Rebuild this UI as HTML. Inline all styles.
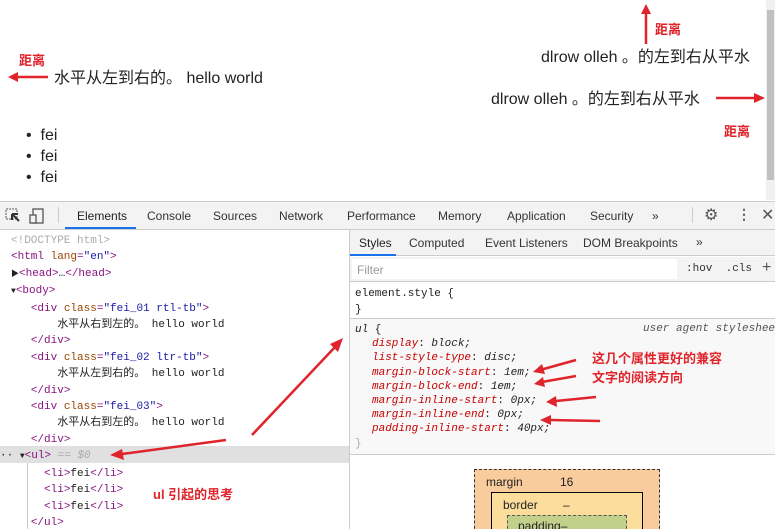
<!DOCTYPE html>
<html style="overflow:hidden;width:775px;height:529px"><head><meta charset="utf-8"><style>
*{margin:0;padding:0;box-sizing:border-box}
body{width:775px;height:529px;overflow:hidden;background:#fff;position:relative;font-family:"Liberation Sans","Noto Sans CJK SC",sans-serif}
.a{position:absolute;white-space:nowrap}
.m{font-family:"Liberation Mono","Noto Sans CJK SC",monospace;font-size:11px;color:#222}
.tg{color:#881280}.at{color:#994500}.av{color:#1a1aa6}.gr{color:#aaa}
.red{color:#e0242b;font-weight:bold;font-size:13px}
.t16{font-size:16px;color:#222}
.tab{font-size:12px;color:#333;top:209px}
.prop{color:#c80000;font-style:italic}
.val{color:#222;font-style:italic}
</style></head><body>
<!-- page area -->
<div class="a" style="left:766px;top:0;width:9px;height:200px;background:#f1f1f1"></div>
<div class="a" style="left:767px;top:10px;width:7px;height:170px;background:#c1c1c1"></div>
<div class="a t16" style="left:54px;top:64px">水平从左到右的。 hello world</div>
<div class="a t16" style="left:541px;top:43px">dlrow olleh 。的左到右从平水</div>
<div class="a t16" style="left:491px;top:85px">dlrow olleh 。的左到右从平水</div>
<div class="a t16" style="left:26px;top:125px;line-height:21px">•&nbsp;&nbsp;fei<br>•&nbsp;&nbsp;fei<br>•&nbsp;&nbsp;fei</div>
<div class="a red" style="left:19px;top:50px">距离</div>
<div class="a red" style="left:655px;top:19px">距离</div>
<div class="a red" style="left:724px;top:121px">距离</div>
<!-- devtools toolbar -->
<div class="a" style="left:0;top:201px;width:775px;height:29px;background:#f3f3f3;border-top:1px solid #ccc;border-bottom:1px solid #ccc"></div>
<svg class="a" style="left:5px;top:207px" width="45" height="18"><rect x="1" y="2" width="11" height="10" fill="none" stroke="#555" stroke-dasharray="2,1"/><path d="M7 7 L14 14 M7 7 L7 13 M7 7 L13 7" stroke="#333" stroke-width="2"/><rect x="28" y="2" width="10" height="14" fill="none" stroke="#555" stroke-width="1.3"/><rect x="25" y="8" width="6" height="8" fill="#f3f3f3" stroke="#555" stroke-width="1.3"/></svg>
<div class="a" style="left:58px;top:207px;width:1px;height:16px;background:#ccc"></div>
<div class="a tab" style="left:77px;color:#222">Elements</div>
<div class="a" style="left:65px;top:227px;width:71px;height:2px;background:#1a73e8"></div>
<div class="a tab" style="left:147px">Console</div>
<div class="a tab" style="left:213px">Sources</div>
<div class="a tab" style="left:279px">Network</div>
<div class="a tab" style="left:347px">Performance</div>
<div class="a tab" style="left:438px">Memory</div>
<div class="a tab" style="left:507px">Application</div>
<div class="a tab" style="left:590px">Security</div>
<div class="a tab" style="left:652px">»</div>
<div class="a" style="left:692px;top:207px;width:1px;height:16px;background:#ccc"></div>
<div class="a" style="left:704px;top:205px;font-size:16px;color:#555">⚙</div>
<div class="a" style="left:737px;top:206px;font-size:14px;color:#555;font-weight:bold">⋮</div>
<div class="a" style="left:761px;top:205px;font-size:16px;color:#555">✕</div>
<!-- elements panel -->
<div class="a" style="left:0;top:446px;width:349px;height:17px;background:#e0e0e0"></div>
<div class="a m" style="left:11px;top:233px;line-height:16.4px">
<span class="gr">&lt;!DOCTYPE html&gt;</span><br>
<span class="tg">&lt;html </span><span class="at">lang</span><span class="tg">=</span><span class="av">"en"</span><span class="tg">&gt;</span><br>
<span style="font-size:8px">▶</span><span class="tg">&lt;head&gt;</span>…<span class="tg">&lt;/head&gt;</span><br>
<span style="font-size:8px">▼</span><span class="tg">&lt;body&gt;</span><br>
&nbsp;&nbsp;&nbsp;<span class="tg">&lt;div </span><span class="at">class</span><span class="tg">=</span><span class="av">"fei_01 rtl-tb"</span><span class="tg">&gt;</span><br>
&nbsp;&nbsp;&nbsp;&nbsp;&nbsp;&nbsp;&nbsp;水平从右到左的。 hello world<br>
&nbsp;&nbsp;&nbsp;<span class="tg">&lt;/div&gt;</span><br>
&nbsp;&nbsp;&nbsp;<span class="tg">&lt;div </span><span class="at">class</span><span class="tg">=</span><span class="av">"fei_02 ltr-tb"</span><span class="tg">&gt;</span><br>
&nbsp;&nbsp;&nbsp;&nbsp;&nbsp;&nbsp;&nbsp;水平从左到右的。 hello world<br>
&nbsp;&nbsp;&nbsp;<span class="tg">&lt;/div&gt;</span><br>
&nbsp;&nbsp;&nbsp;<span class="tg">&lt;div </span><span class="at">class</span><span class="tg">=</span><span class="av">"fei_03"</span><span class="tg">&gt;</span><br>
&nbsp;&nbsp;&nbsp;&nbsp;&nbsp;&nbsp;&nbsp;水平从右到左的。 hello world<br>
&nbsp;&nbsp;&nbsp;<span class="tg">&lt;/div&gt;</span><br>
<span style="margin-left:-11px">··</span>&nbsp;<span style="font-size:8px">▼</span><span class="tg">&lt;ul&gt;</span> <span class="gr">== <i>$0</i></span><br>
&nbsp;&nbsp;&nbsp;&nbsp;&nbsp;<span class="tg">&lt;li&gt;</span>fei<span class="tg">&lt;/li&gt;</span><br>
&nbsp;&nbsp;&nbsp;&nbsp;&nbsp;<span class="tg">&lt;li&gt;</span>fei<span class="tg">&lt;/li&gt;</span><br>
&nbsp;&nbsp;&nbsp;&nbsp;&nbsp;<span class="tg">&lt;li&gt;</span>fei<span class="tg">&lt;/li&gt;</span><br>
&nbsp;&nbsp;&nbsp;<span class="tg">&lt;/ul&gt;</span>
</div>
<div class="a" style="left:27px;top:463px;width:1px;height:66px;background:#ccc"></div>
<div class="a red" style="left:153px;top:484px">ul 引起的思考</div>
<!-- styles panel -->
<div class="a" style="left:349px;top:230px;width:1px;height:299px;background:#ccc"></div>
<div class="a" style="left:350px;top:230px;width:425px;height:26px;background:#f3f3f3;border-bottom:1px solid #ccc"></div>
<div class="a" style="left:359px;top:236px;font-size:12px;color:#222">Styles</div>
<div class="a" style="left:350px;top:254px;width:46px;height:2px;background:#1a73e8"></div>
<div class="a" style="left:409px;top:236px;font-size:12px;color:#333">Computed</div>
<div class="a" style="left:485px;top:236px;font-size:12px;color:#333">Event Listeners</div>
<div class="a" style="left:583px;top:236px;font-size:12px;color:#333">DOM Breakpoints</div>
<div class="a" style="left:696px;top:235px;font-size:12px;color:#333">»</div>
<div class="a" style="left:350px;top:257px;width:425px;height:25px;background:#f3f3f3;border-bottom:1px solid #ccc"></div>
<div class="a" style="left:352px;top:259px;width:325px;height:20px;background:#fff"></div>
<div class="a" style="left:357px;top:263px;font-size:12px;color:#999">Filter</div>
<div class="a m" style="left:686px;top:263px;color:#333">:hov &nbsp;.cls</div>
<div class="a" style="left:762px;top:259px;font-size:16px;color:#555">+</div>
<div class="a m" style="left:355px;top:286px;line-height:16px">element.style {<br>}</div>
<div class="a" style="left:350px;top:318px;width:425px;height:1px;background:#ccc"></div>
<div class="a" style="left:350px;top:319px;width:425px;height:135px;background:#f8f8f8"></div>
<div class="a m" style="left:643px;top:323px;font-style:italic;color:#555">user agent stylesheet</div>
<div class="a m" style="left:355px;top:323px;line-height:14.2px"><i>ul</i> {<br>
<div style="padding-left:17px"><span class="prop">display</span>: <span class="val">block;</span><br>
<span class="prop">list-style-type</span>: <span class="val">disc;</span><br>
<span class="prop">margin-block-start</span>: <span class="val">1em;</span><br>
<span class="prop">margin-block-end</span>: <span class="val">1em;</span><br>
<span class="prop">margin-inline-start</span>: <span class="val">0px;</span><br>
<span class="prop">margin-inline-end</span>: <span class="val">0px;</span><br>
<span class="prop">padding-inline-start</span>: <span class="val">40px;</span></div>
<span class="gr">}</span></div>
<div class="a" style="left:350px;top:454px;width:425px;height:1px;background:#ccc"></div>
<div class="a red" style="left:592px;top:349px;line-height:19px">这几个属性更好的兼容<br>文字的阅读方向</div>
<!-- box model -->
<div class="a" style="left:474px;top:469px;width:186px;height:70px;background:#f9cc9d;border:1px dashed #333"></div>
<div class="a" style="left:486px;top:475px;font-size:12px;color:#222">margin</div>
<div class="a" style="left:560px;top:475px;font-size:12px;color:#222">16</div>
<div class="a" style="left:491px;top:492px;width:152px;height:50px;background:#fddd9b;border:1px solid #000"></div>
<div class="a" style="left:503px;top:498px;font-size:12px;color:#222">border</div>
<div class="a" style="left:563px;top:498px;font-size:12px;color:#222">–</div>
<div class="a" style="left:507px;top:515px;width:120px;height:30px;background:#c3d08b;border:1px dashed #555"></div>
<div class="a" style="left:518px;top:519px;font-size:12px;color:#222">padding–</div>
<svg class="a" style="left:0;top:0" width="775" height="529">
<g stroke="#e0242b" stroke-width="2.5" fill="#e0242b">
<line x1="48" y1="77" x2="14" y2="77"/><polygon points="8,77 18,72 18,82" stroke="none"/>
<line x1="646" y1="44" x2="646" y2="10"/><polygon points="646,4 641,14 651,14" stroke="none"/>
<line x1="716" y1="98" x2="758" y2="98"/><polygon points="765,98 754,93 754,103" stroke="none"/>
<line x1="252" y1="435" x2="336" y2="346"/><polygon points="343,338 330,344 338,352" stroke="none"/>
<line x1="226" y1="440" x2="122" y2="454"/><polygon points="110,455 122,449 124,460" stroke="none"/>
<line x1="576" y1="360" x2="540" y2="370"/><polygon points="533,372 542,364 545,374" stroke="none"/>
<line x1="576" y1="376" x2="542" y2="382"/><polygon points="534,384 543,377 545,387" stroke="none"/>
<line x1="596" y1="397" x2="556" y2="401"/><polygon points="546,402 556,396 557,407" stroke="none"/>
<line x1="600" y1="421" x2="550" y2="420"/><polygon points="540,420 551,415 551,425" stroke="none"/>
</g></svg>
</body></html>
